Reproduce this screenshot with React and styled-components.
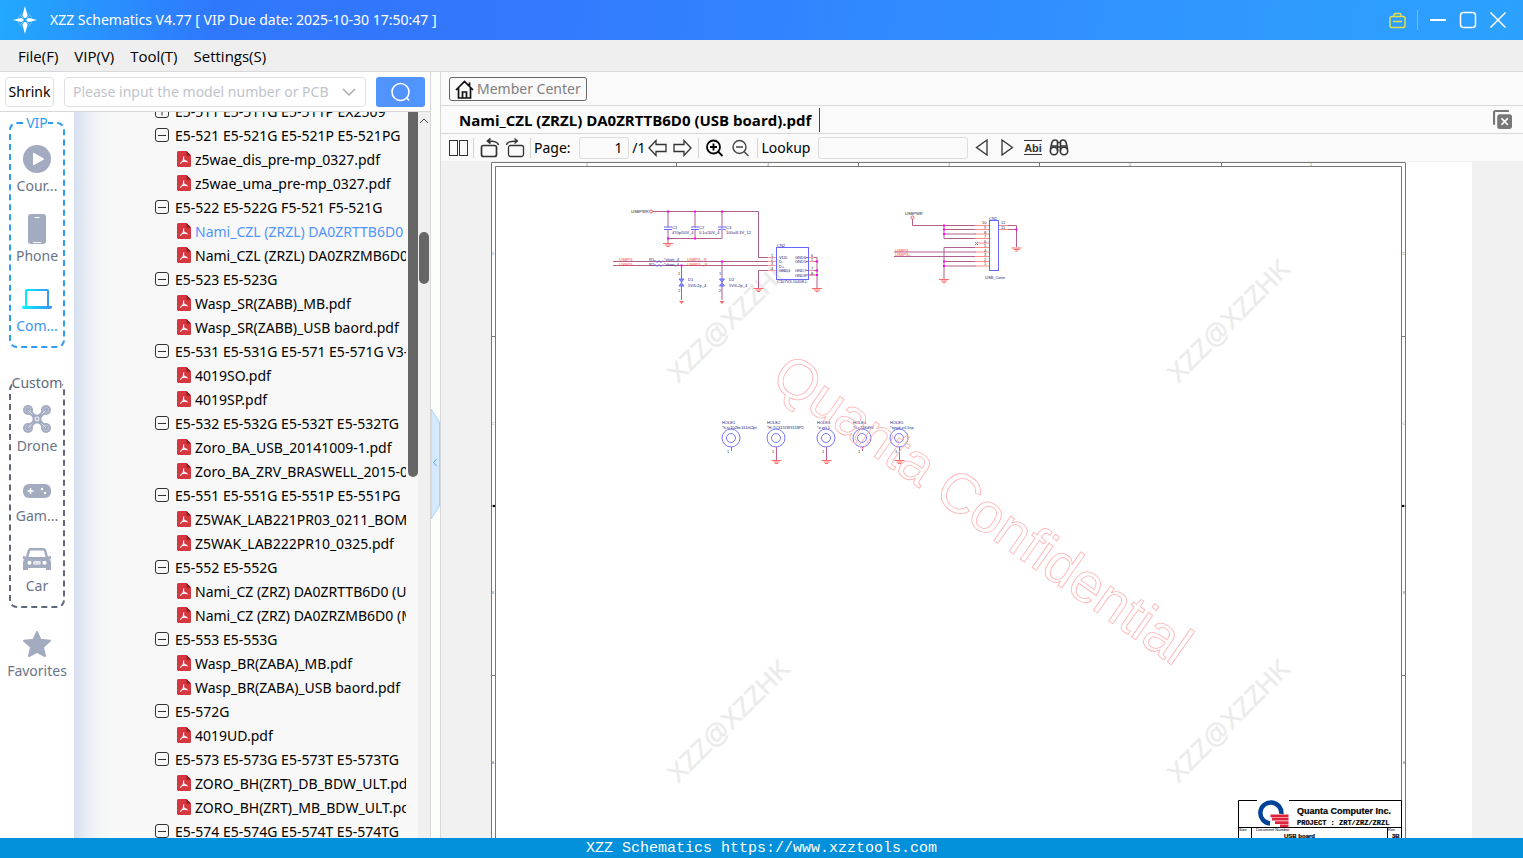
import React from "react";
import styled, { createGlobalStyle } from "styled-components";

const Global = createGlobalStyle`
  * { box-sizing: border-box; }
  html, body, #root { height: 100%; margin: 0; }
  body { font: 14px/24px "Noto Sans", "Open Sans", sans-serif; color: #000; overflow: hidden; }
  button, input { font: inherit; color: inherit; margin: 0; }
  button { background: none; border: 0; padding: 0; cursor: pointer; }
  ul { list-style: none; margin: 0; padding: 0; }
  svg { display: block; flex: none; }
`;

const Shell = styled.div`
  height: 100vh;
  display: flex;
  flex-direction: column;
`;

const TitleBar = styled.header`
  flex: none;
  height: 40px;
  display: flex;
  align-items: center;
  padding: 0 16px 0 12px;
  color: #fff;
  background: linear-gradient(97deg, #22a9fd 0%, #2f78fd 14%, #3377fe 32%, #2f9bff 85%, #2ba1fd 100%);
`;

const AppName = styled.h1`
  flex: 1;
  margin: 0 0 0 12px;
  font-size: 14px;
  font-weight: 400;
`;

const WindowControls = styled.div`
  display: flex;
  align-items: center;
  gap: 12px;
`;

const ControlDivider = styled.span`
  width: 1px;
  height: 20px;
  margin: 0 -1px;
  background: #7ab9ff;
`;

const MenuBar = styled.nav`
  flex: none;
  height: 32px;
  display: flex;
  align-items: center;
  gap: 16px;
  padding: 0 18px;
  font-family: "Open Sans", sans-serif;
  font-size: 15px;
  background: #efefef;
  border-bottom: 1px solid #d8d8d8;
`;

const Workspace = styled.div`
  flex: 1;
  min-height: 0;
  display: flex;
`;

const LeftPane = styled.aside`
  flex: none;
  width: 431px;
  display: flex;
  flex-direction: column;
  border-right: 1px solid #d8d8d8;
`;

const SearchRow = styled.form`
  flex: none;
  height: 40px;
  display: flex;
  align-items: center;
  gap: 10px;
  padding: 1px 5px 0;
  background: #fff;
  border-bottom: 1px solid #d8d8d8;
`;

const ShrinkButton = styled.button`
  width: 49px;
  height: 30px;
  border: 1px solid #dcdfe6;
  border-radius: 4px;
`;

const SearchField = styled.label`
  flex: 1;
  height: 30px;
  display: flex;
  align-items: center;
  padding: 0 9px 0 8px;
  border: 1px solid #dcdfe6;
  border-radius: 4px;
`;

const SearchInput = styled.input`
  flex: 1;
  min-width: 0;
  padding: 0;
  border: 0;
  outline: 0;
  &::placeholder { color: #c0c4cc; opacity: 1; }
`;

const SearchButton = styled.button`
  width: 49px;
  height: 30px;
  display: grid;
  place-items: center;
  background: #5294ff;
  border-radius: 3px;
`;

const Browser = styled.div`
  flex: 1;
  min-height: 0;
  display: flex;
`;

const Categories = styled.nav`
  flex: none;
  width: 74px;
  padding: 0 9px;
  background: #fff;
`;

const CategoryGroup = styled.fieldset`
  height: 236px;
  min-width: 0;
  margin: 0 0 ${(p) => p.$gap};
  padding: 7px 0 0;
  border: 2px dashed ${(p) => p.$color};
  border-radius: 8px;
`;

const GroupLabel = styled.legend`
  margin: 0 auto;
  padding: 0;
  line-height: 22px;
  color: ${(p) => p.$color};
`;

const Category = styled.button`
  width: 100%;
  height: 70px;
  display: flex;
  flex-direction: column;
  align-items: center;
  line-height: 18px;
  color: ${(p) => (p.$active ? "#3a96f5" : "#6b7487")};
  white-space: nowrap;
`;

const TreePane = styled.div`
  flex: 1;
  min-width: 0;
  padding-right: 12px;
  overflow: hidden;
  background: linear-gradient(90deg, #d5dff0 0, #e8ecf3 12px, #f3f5f7 24px, #f8f8f8 36px);
`;

const TreeList = styled.ul`
  margin-top: -13px;
  overflow: hidden;
  white-space: nowrap;
`;

const GroupRow = styled.button`
  height: 24px;
  display: flex;
  align-items: center;
  gap: 6px;
  padding-left: 81px;
`;

const FileRow = styled.a`
  height: 24px;
  display: flex;
  align-items: center;
  gap: 4px;
  padding-left: 103px;
  text-decoration: none;
  color: ${(p) => (p.$selected ? "#5294ff" : "#000")};
`;

const RowText = styled.span`
  padding-top: 2px;
`;

const InnerScroll = styled.div`
  flex: none;
  width: 10px;
  height: 365px;
  margin-left: -10px;
  background: #666;
  border-radius: 0 0 5px 5px;
`;

const ScrollTrack = styled.div`
  flex: none;
  width: 12px;
  padding: 6px 1px 0;
  background: #f0f0f0;
`;

const ScrollThumb = styled.div`
  height: 52px;
  margin-top: 108px;
  border-radius: 5px;
  background: #666;
`;

const Gutter = styled.div`
  position: relative;
  flex: none;
  width: 10px;
  background: #fbfffa;
  border-right: 1px solid #d8d8d8;
`;

const CollapseHandle = styled.button`
  position: absolute;
  top: 44%;
  left: 0;
`;

const Main = styled.main`
  flex: 1;
  min-width: 0;
  display: flex;
  flex-direction: column;
  background: #fafafa;
`;

const MemberBar = styled.div`
  flex: none;
  height: 34px;
  padding: 5px 8px 0;
  border-bottom: 1px solid #d8d8d8;
`;

const MemberButton = styled.button`
  height: 24px;
  display: flex;
  align-items: center;
  gap: 3px;
  padding: 0 5px;
  border: 1px solid #666;
  border-radius: 3px;
  color: #808080;
`;

const TabBar = styled.div`
  flex: none;
  height: 28px;
  display: flex;
  align-items: center;
  justify-content: space-between;
  padding: 0 11px 0 8px;
  border-bottom: 1px solid #d8d8d8;
`;

const Tab = styled.button`
  height: 24px;
  padding: 0 8px 0 10px;
  border-right: 1px solid #444;
  font-family: "Open Sans", sans-serif;
  font-size: 15px;
  font-weight: 700;
  line-height: 22px;
`;

const Toolbar = styled.div`
  flex: none;
  height: 27px;
  display: flex;
  align-items: center;
  padding-left: 7px;
`;

const ToolButton = styled.button`
  height: 24px;
  min-width: ${(p) => p.$width || "25px"};
  display: grid;
  place-items: center;
`;

const ToolDivider = styled.span`
  width: 1px;
  height: 20px;
  background: #d5d5d5;
  margin: 0 3px;
`;

const ToolField = styled.input`
  width: ${(p) => p.$width};
  height: 22px;
  margin-left: 8px;
  padding: 0 5px;
  border: 1px solid #dedede;
  border-radius: 3px;
  background: #fafafa;
  text-align: right;
`;

const Viewer = styled.section`
  flex: 1;
  min-height: 0;
  overflow: hidden;
  padding: 1px 51px 0 50px;
  background: #f1f1f1;
`;

const Sheet = styled.div`
  height: 100%;
  background: #fff;
  overflow: hidden;
`;

const Footer = styled.footer`
  flex: none;
  height: 20px;
  background: #0290db;
  color: #fff;
  font: 15px/22px "Liberation Mono", monospace;
  text-align: center;
`;

const AppLogo = () => (
  <svg width="26" height="30" viewBox="0 0 26 30" fill="#fff">
    <circle cx="13" cy="15" r="7" fill="none" stroke="#6fbaff" strokeWidth="1" />
    <path d="M13 1l2.600 9.500L14 13h-2l-1.600-2.500zM13 29l2.600-9.500L14 17h-2l-1.600 2.500zM1 15l8-2 2.500 1v2L9 17zM25 15l-8-2-2.500 1v2l2.500 1z" />
    <path d="M8.500 10.500l2.500 2.500M17.500 10.500L15 13M8.500 19.500L11 17M17.500 19.500L15 17" stroke="#8fcaff" />
  </svg>
);

const BagIcon = () => (
  <svg width="18" height="18" viewBox="0 0 18 18" fill="none" stroke="#e8e04a" strokeWidth="1.400">
    <rect x="2" y="5.500" width="15" height="11" rx="2" />
    <path d="M6 5.500V4A1.500 1.500 0 0 1 7.500 2.500h4A1.500 1.500 0 0 1 13 4v1.500M5 10.500h9" />
  </svg>
);

const MinimizeIcon = () => (
  <svg width="18" height="18" viewBox="0 0 18 18" stroke="#fff" strokeWidth="2"><path d="M1 9h16" /></svg>
);
const MaximizeIcon = () => (
  <svg width="18" height="18" viewBox="0 0 18 18" fill="none" stroke="#fff" strokeWidth="1.500"><rect x="1.500" y="1.500" width="15" height="15" rx="3" /></svg>
);
const CloseIcon = () => (
  <svg width="18" height="18" viewBox="0 0 18 18" stroke="#fff" strokeWidth="1.500"><path d="M1.500 1.500l15 15M16.500 1.500l-15 15" /></svg>
);

const ICON = "#a2abbf";

const PlayIcon = () => (
  <svg width="28" height="28" viewBox="0 0 28 28">
    <circle cx="14" cy="14" r="14" fill={ICON} />
    <path d="M10 8.500v11q0 1 1 .6l9.500-5.300q1-.8 0-1.600L11 7.900q-1-.4-1 .6z" fill="#fff" />
  </svg>
);
const PhoneIcon = () => (
  <svg width="18" height="30" viewBox="0 0 18 30">
    <rect width="18" height="30" rx="3" fill={ICON} />
    <path d="M6.500 3.500h5M5 28.500h8" stroke="#fff" strokeWidth="1.200" />
  </svg>
);
const LaptopIcon = () => (
  <svg width="30" height="20" viewBox="0 0 30 20">
    <defs>
      <linearGradient id="laptop" x1="0" x2="1"><stop offset="0" stopColor="#00f6ff" /><stop offset="1" stopColor="#3a8ef8" /></linearGradient>
    </defs>
    <path fillRule="evenodd" fill="url(#laptop)" d="M3 17V1.500Q3 0 4.500 0h21Q27 0 27 1.500V17h3v1q0 2-2 2H2q-2 0-2-2v-1zM5 2v15h20V2z" />
  </svg>
);
const DroneIcon = () => (
  <svg width="28" height="28" viewBox="0 0 28 28" fill={ICON}>
    <path d="M5 5l18 18M23 5L5 23" stroke={ICON} strokeWidth="4" />
    <rect x="9.500" y="9.500" width="9" height="9" rx="4" />
    {[[5, 5], [23, 5], [5, 23], [23, 23]].map(([x, y]) => (
      <g key={`${x}-${y}`}>
        <circle cx={x} cy={y} r="5" />
        <circle cx={x} cy={y} r="2.800" fill="none" stroke="#ccd2dd" strokeWidth=".6" />
      </g>
    ))}
    <circle cx="14" cy="14" r="2" fill="none" stroke="#fff" strokeWidth="1" />
    <path d="M5 5l4.500 4.500M23 5l-4.500 4.500M5 23l4.500-4.500M23 23l-4.500-4.500" stroke="#e2e5ec" strokeWidth=".8" />
  </svg>
);
const PadIcon = () => (
  <svg width="28" height="18" viewBox="0 -4 28 18">
    <rect width="28" height="14" rx="6" fill={ICON} />
    <path d="M4.500 7h6M7.500 4v6" stroke="#fff" strokeWidth="1.500" />
    <circle cx="19" cy="5" r="1.200" fill="#fff" />
    <circle cx="22" cy="9" r="1.200" fill="#fff" />
  </svg>
);
const CarIcon = () => (
  <svg width="28" height="24" viewBox="0 0 28 24">
    <path fill={ICON} fillRule="evenodd" d="M7.500 1h13q2 0 2.700 2l1.800 6.500 3-.5v3l-1.500.5q1.500 1 1.500 3V23h-5v-2H5v2H0v-7.500q0-2 1.500-3L0 12V9l3 .5L4.800 3Q5.500 1 7.500 1zM8 3.500q-.8 0-1 .8L5.500 10h17L21 4.300q-.2-.8-1-.8zM6.500 13.800a2 2 0 1 0 .01 0zM21.500 13.800a2 2 0 1 0 .01 0zM10.500 14.300v3.200h7v-3.200z" />
    <path d="M11.500 16h2m1 0h2" stroke={ICON} />
  </svg>
);
const StarIcon = () => (
  <svg width="28" height="28" viewBox="0 0 28 28" fill={ICON} stroke={ICON} strokeWidth="2" strokeLinejoin="round">
    <path d="M14 2l3.500 7.800 9.500 1-7 6.300L22 26l-8-4.200L6 26l2-8.900-7-6.300 9.500-1z" />
  </svg>
);

const ToggleIcon = ({ open = true }) => (
  <svg width="14" height="14" viewBox="0 0 14 14" fill="none" stroke="#333" strokeWidth="1">
    <rect x=".5" y=".5" width="13" height="13" rx="2.500" />
    <path d={open ? "M3 7.500h8" : "M3 7.500h8M7 3.500v8"} />
  </svg>
);

const PdfIcon = () => (
  <svg width="14" height="16" viewBox="0 0 14 16">
    <path d="M1.500 0H9.500L14 4.500V14.500Q14 16 12.500 16H1.500Q0 16 0 14.500V1.500Q0 0 1.500 0z" fill="#d4373f" />
    <path d="M9.500 0L14 4.500H9.500z" fill="#8d1720" />
    <path d="M6.600 5.500v2.500q0 2-3.300 4.500M6.700 8.500q1 2.300 4 2.400M4.500 11q3-1.300 5.500-.8" fill="none" stroke="#fff" strokeWidth="1.100" />
  </svg>
);

const SearchIcon = () => (
  <svg width="20" height="20" viewBox="0 0 20 20" fill="none" stroke="#fff" strokeWidth="1.600">
    <circle cx="9.500" cy="10" r="8.500" /><path d="M15.500 15.500L18 18.500" />
  </svg>
);
const Chevron = () => (
  <svg width="14" height="10" viewBox="0 0 14 10" fill="none" stroke="#a8abb2" strokeWidth="1.500"><path d="M1 2l6 6 6-6" /></svg>
);
const HomeIcon = () => (
  <svg width="19" height="20" viewBox="0 0 19 20" fill="none" stroke="#111" strokeWidth="1.700">
    <path d="M1 11l8.500-8.500L18 11M3.500 9v10h12V9M7.500 19v-6h4v6M14.500 7V3.500" />
  </svg>
);
const CloseAllIcon = () => (
  <svg width="19" height="19" viewBox="0 0 18 18" fill="none">
    <path d="M1 14V2.500Q1 1 2.500 1H15" stroke="#777" strokeWidth="2" />
    <rect x="4" y="4" width="14" height="14" rx="2.500" fill="#777" />
    <path d="M8 8l6 6M14 8l-6 6" stroke="#fff" strokeWidth="1.600" />
  </svg>
);

const line = { fill: "none", stroke: "#333", strokeWidth: 1.3 };
const PagesIcon = () => (
  <svg width="20" height="18" viewBox="0 0 20 18" {...line} strokeWidth="1"><rect x=".5" y="1.500" width="8" height="15" /><rect x="10.500" y="1.500" width="8" height="15" /></svg>
);
const RotateIcon = ({ flip }) => (
  <svg width="20" height="20" viewBox="0 0 20 20" {...line} strokeWidth={flip ? 1.3 : 1.7}>
    <g transform={flip ? "translate(20 0) scale(-1 1)" : undefined}>
      <rect x="1.500" y="7.500" width="15" height="11" rx="2" />
      <path d="M18.500 7Q18 3 8 3M10.500 .5L7.500 3l3 2.500" />
    </g>
  </svg>
);
const ArrowIcon = ({ flip }) => (
  <svg width="19" height="18" viewBox="0 0 19 18" {...line}>
    <path transform={flip ? "translate(19 0) scale(-1 1)" : undefined} d="M1 9l7-7.500V5.500h10v7H8v4z" />
  </svg>
);
const ZoomIcon = ({ plus }) => (
  <svg width="18" height="18" viewBox="0 0 18 18" fill="none" stroke={plus ? "#000" : "#444"} strokeWidth={plus ? 1.8 : 1.4}>
    <circle cx="7.500" cy="8" r="6.500" /><path d={plus ? "M12 12.500l4.500 4.500M4 8h7M7.500 4.500v7" : "M12 12.500l4.500 4.500M4 8h7"} />
  </svg>
);
const StepIcon = ({ flip }) => (
  <svg width="13" height="17" viewBox="0 0 13 17" {...line}>
    <path transform={flip ? "translate(13 0) scale(-1 1)" : undefined} d="M1.500 8.500L12 1v15z" />
  </svg>
);
const WordIcon = () => (
  <svg width="18" height="16" viewBox="0 0 18 16">
    <path d="M0 .5h18M0 14.500h18" stroke="#333" />
    <text x="9" y="12" fontSize="11" fontWeight="700" textAnchor="middle" fill="#333" fontFamily="Liberation Sans, sans-serif">Abi</text>
  </svg>
);
const BinocularsIcon = () => (
  <svg width="20" height="17" viewBox="0 0 20 17" {...line} strokeWidth="1.600">
    <path d="M1.500 10L3 3q1-2 3-2 2.500 0 2.500 2v9M18.500 10L17 3q-1-2-3-2-2.500 0-2.500 2v9M8.500 3.500h3M8.500 8h3" />
    <circle cx="5" cy="12" r="3.700" /><circle cx="15" cy="12" r="3.700" /><path d="M3 7h5M12 7h5" />
  </svg>
);

const VIP_BLUE = "#2f9bf5";
const SLATE = "#5f6879";

const vip = [
  ["Cour...", PlayIcon],
  ["Phone", PhoneIcon],
  ["Com...", LaptopIcon, true],
];
const custom = [
  ["Drone", DroneIcon],
  ["Gam...", PadIcon],
  ["Car", CarIcon],
];

const IconSlot = styled.span`
  height: 36px;
  display: grid;
  place-items: center;
`;

const CategoryItem = ({ label, Icon, active }) => (
  <Category type="button" $active={active}>
    <IconSlot><Icon /></IconSlot>
    {label}
  </Category>
);

const tree = [
  ["E5-511 E5-511G E5-511P EX2509", [], false],
  ["E5-521 E5-521G E5-521P E5-521PG", ["z5wae_dis_pre-mp_0327.pdf", "z5wae_uma_pre-mp_0327.pdf"]],
  ["E5-522 E5-522G F5-521 F5-521G", ["Nami_CZL (ZRZL) DA0ZRTTB6D0 (USB board).pdf", "Nami_CZL (ZRZL) DA0ZRZMB6D0 (MB).pdf"]],
  ["E5-523 E5-523G", ["Wasp_SR(ZABB)_MB.pdf", "Wasp_SR(ZABB)_USB baord.pdf"]],
  ["E5-531 E5-531G E5-571 E5-571G V3-531", ["4019SO.pdf", "4019SP.pdf"]],
  ["E5-532 E5-532G E5-532T E5-532TG", ["Zoro_BA_USB_20141009-1.pdf", "Zoro_BA_ZRV_BRASWELL_2015-01.pdf"]],
  ["E5-551 E5-551G E5-551P E5-551PG", ["Z5WAK_LAB221PR03_0211_BOM.pdf", "Z5WAK_LAB222PR10_0325.pdf"]],
  ["E5-552 E5-552G", ["Nami_CZ (ZRZ) DA0ZRTTB6D0 (USB board).pdf", "Nami_CZ (ZRZ) DA0ZRZMB6D0 (MB).pdf"]],
  ["E5-553 E5-553G", ["Wasp_BR(ZABA)_MB.pdf", "Wasp_BR(ZABA)_USB baord.pdf"]],
  ["E5-572G", ["4019UD.pdf"]],
  ["E5-573 E5-573G E5-573T E5-573TG", ["ZORO_BH(ZRT)_DB_BDW_ULT.pdf", "ZORO_BH(ZRT)_MB_BDW_ULT.pdf"]],
  ["E5-574 E5-574G E5-574T E5-574TG", []],
];

const Ground = ({ x, y }) => (
  <path d={`M${x - 5} ${y}h10M${x - 3} ${y + 1.5}h6M${x - 1.5} ${y + 3}h3`} stroke="#ff6b6b" strokeWidth="1" fill="none" />
);
const Dots = ({ at }) => at.map(([x, y]) => <rect key={`${x},${y}`} x={x - 1} y={y - 1} width="2" height="2" fill="#f0f" />);

const UsbPower = () => (
  <g fill="none">
    <g stroke="#b0608c">
      <path d="M653 211.500H758.500V257.500H770M668 211.500v16M695 211.500v16M722 211.500v16M668 230v8.500H722V230M695 230v8.500M668 238.500v5" />
      <path d="M613 261.500H770M613 265.500H770M681.500 265.500V300M722 261.500V300M776 270.500H758.500V288M817 257.500v31M806 257.500h11M806 261.500h11M806 270.500h11M806 275h11" />
    </g>
    <path d="M768 257.500h8M768 261.500h8M768 265.500h8M768 270.500h8M808 257.500h6M808 261.500h6M808 270.500h6M808 275h6" stroke="#f99" />
    <circle cx="651" cy="211.500" r="1.500" stroke="#f55" />
    <g stroke="#66f">
      <path d="M664 227h8M664 229.500h8M691 227h8M691 229.500h8M718 227h8M718 230q4-2 8 0M654 261.500l1-1 2 2 2-2 2 2 2-2M654 265.500l1-1 2 2 2-2 2 2 2-2" />
      <path d="M679 279h5l-2.500 3zM679 286h5l-2.500-3zM719.500 279h5l-2.500 3zM719.500 286h5l-2.500-3z" fill="#99f" />
      <rect x="776.500" y="247.500" width="32" height="32" />
    </g>
    <Ground x={668} y={243.5} /><Ground x={758.5} y={288.5} /><Ground x={817} y={288.5} />
    <path d="M679 301h5l-2.500 3zM719.500 301h5l-2.500 3z" fill="#f66" />
    <Dots at={[[668, 211.5], [695, 211.5], [722, 211.5], [668, 238.5], [695, 238.5], [722, 261.5], [681.5, 265.5], [817, 261.5], [817, 270.5], [817, 275]]} />
    <g fontSize="4" fill="#22227e">
      <text x="631" y="213" fill="#222">USBPWR</text>
      <text x="672" y="229">C1</text><text x="672" y="234">470p/50V_4</text>
      <text x="699" y="229">C2</text><text x="699" y="234">0.1u/10V_4</text>
      <text x="726" y="229">C3</text><text x="726" y="234">100u/6.3V_12</text>
      <text x="649" y="261">R1</text><text x="664" y="261">*short_4</text>
      <text x="649" y="266">R2</text><text x="664" y="266">*short_4</text>
      <text x="688" y="281">D1</text><text x="688" y="287">5V/0.2p_4</text>
      <text x="729" y="281">D2</text><text x="729" y="287">5V/0.2p_4</text>
      <text x="777" y="247">CN2</text><text x="777" y="283">C107V3-10408-L</text>
      <text x="779" y="259">VDD</text><text x="779" y="263">D-</text><text x="779" y="268">D+</text><text x="779" y="272">GND1</text>
      <text x="795" y="259">GND6</text><text x="795" y="263">GND5</text><text x="795" y="272">GND7</text><text x="795" y="277">GND8</text>
      <g fill="#f44">
        <text x="619" y="261">USBP3-</text><text x="619" y="266">USBP3+</text>
        <text x="687" y="261">USBP3-_R</text><text x="687" y="266">USBP3+_R</text>
      </g>
      <g fill="#333">
        <text x="771" y="257">1</text><text x="771" y="261">2</text><text x="771" y="265">3</text><text x="771" y="270">4</text>
        <text x="811" y="257">6</text><text x="811" y="261">5</text><text x="811" y="270">7</text><text x="811" y="275">8</text>
        <text x="678" y="275">1</text><text x="678" y="292">2</text><text x="719" y="275">1</text><text x="719" y="292">2</text>
      </g>
    </g>
  </g>
);

const UsbConnector = () => (
  <g fill="none">
    <path d="M912.500 219v6.500H976M944 225.500v13M944 229.500h32M944 234h32M944 238.500h32M894 252H976M894 256.500H976M976 247.500H944V279M944 261.500h32M944 266h32M1006 225.500h10.500V247M1006 229.500h10.500" stroke="#b0608c" />
    <path d="M975 225.500h14M975 229.500h14M975 234h14M975 238.500h14M978 243h11M975 247.500h14M975 252h14M975 256.500h14M975 261.500h14M975 266h14M999 225.500h9M999 229.500h9" stroke="#f88" />
    <path d="M975 242l3 3M978 242l-3 3" stroke="#a77" />
    <circle cx="912.500" cy="217.500" r="1.500" stroke="#f55" />
    <rect x="989.500" y="220.500" width="9" height="50" stroke="#66f" />
    <Ground x={1016.5} y={248} /><Ground x={944} y={279.5} />
    <Dots at={[[944, 225.5], [944, 229.5], [944, 234], [944, 261.5], [944, 266], [1016.5, 229.5]]} />
    <g fontSize="4" fill="#22227e">
      <text x="905" y="215" fill="#222">USBPWR</text>
      <text x="989" y="220">CN1</text><text x="985" y="279">USB_Conn</text>
      <text x="895" y="252" fill="#f44">USBP3-</text><text x="895" y="256" fill="#f44">USBP3+</text>
      <g fill="#333">
        <text x="982" y="224">10</text><text x="1001" y="224">12</text><text x="1001" y="229">11</text>
        {[9, 8, 7, 6, 5, 4, 3, 2, 1].map((n, i) => <text key={n} x="984" y={Math.round(229 + i * 4.5)}>{n}</text>)}
      </g>
    </g>
  </g>
);

const holes = [
  [731, "*h-tc102bc161t02pt", false],
  [776, "*H-TC315I393118P2", true],
  [826, "*o-zrl-1", true],
  [862, "*h-c236d98", false],
  [899, "*spad-zrl-1np", true],
];

const Holes = () => holes.map(([x, name, grounded], i) => (
  <g key={x} fill="none">
    <circle cx={x} cy="438" r="9" stroke="#77f" />
    <circle cx={x} cy="438" r="4.500" stroke="#77f" />
    <path d={`M${x + 0.5} 447v${grounded ? 13 : 4}`} stroke="#c0608c" />
    {grounded && <Ground x={x + 0.5} y={460.5} />}
    <text x={x - 9} y="424" fontSize="4" fill="#22227e">HOLE{i + 1}</text>
    <text x={x - 9} y="429" fontSize="4" fill="#22227e">{name}</text>
    <text x={x - 4} y="453" fontSize="4" fill="#333">1</text>
  </g>
));

const TitleBlock = () => (
  <g>
    <path d="M1238.500 860V800.500H1401.500V860M1238.500 827.500H1401.500M1251.500 827.500V860M1387.500 827.500V860" stroke="#000" fill="none" />
    <path d="M1257 799h32v28h-32z" fill="#fff" />
    <path d="M1270 823.400A10.500 10.500 0 1 1 1281.300 814" fill="none" stroke="#00429a" strokeWidth="4.500" />
    <path d="M1270.500 815.800H1288.500M1272 819.200H1288.500M1275 822.600H1288.500M1280 825.800H1288.500" stroke="#e0233c" strokeWidth="2.800" />
    <g fill="#000">
      <text x="1297" y="814" fontSize="9" fontWeight="700" stroke="#000" strokeWidth=".2">Quanta Computer Inc.</text>
      <text x="1297" y="825" fontSize="7" fontWeight="700" fontFamily="Liberation Mono, monospace" stroke="#000" strokeWidth=".2">PROJECT : ZRT/ZRZ/ZRZL</text>
      <text x="1239" y="831" fontSize="4">Size</text>
      <text x="1256" y="831" fontSize="4">Document Number</text>
      <text x="1388" y="831" fontSize="4">Rev</text>
      <text x="1284" y="838" fontSize="6" fontWeight="700" stroke="#000" strokeWidth=".2">USB board</text>
      <text x="1392" y="838" fontSize="6" fontWeight="700" stroke="#000" strokeWidth=".2">3B</text>
    </g>
  </g>
);

const marks = [[678, 384], [1178, 384], [678, 784], [1178, 784]];

const Schematic = () => (
  <svg width="981" height="698" viewBox="491 162 981 698" fontFamily="Liberation Sans, sans-serif" role="img" aria-label="USB board schematic">
    <g fill="#ebebeb" stroke="#ebebeb" strokeWidth=".3" fontSize="26">
      {marks.map(([x, y]) => <text key={`${x}-${y}`} transform={`translate(${x} ${y}) rotate(-45)`}>XZZ@XZZHK</text>)}
    </g>
    <g fill="none" stroke="#777">
      <path d="M491.500 860V162.500H1405.500V860M495.500 860V166.500H1401.500V860" />
      <path d="M676.500 162v4M858.500 162v4M1039.500 162v4M1221.500 162v4M491 336.500h4M491 675.500h4M1402 336.500h4M1402 675.500h4" />
    </g>
    <path d="M491 506h4M1402 506h4" stroke="#000" strokeWidth=".6" />
    <circle cx="494" cy="506" r="1.200" /><circle cx="1403" cy="506" r="1.200" />
    <g fontSize="4" fill="#888" textAnchor="middle">
      {[587, 768, 949, 1130, 1311].map((x, i) => <text key={x} x={x} y="166">{5 - i}</text>)}
      {[253, 423, 592, 762].map((y, i) => (
        <React.Fragment key={y}>
          <text x="493" y={y + 2}>{"DCBA"[i]}</text>
          <text x="1404" y={y + 2}>{"DCBA"[i]}</text>
        </React.Fragment>
      ))}
    </g>
    <UsbPower />
    <UsbConnector />
    <Holes />
    <text transform="translate(769 383) rotate(35)" fontSize="56" fill="none" stroke="#ffb0b0" strokeWidth=".8">Quanta Confidential</text>
    <TitleBlock />
  </svg>
);

export default function App() {
  return (
    <Shell>
      <Global />
      <TitleBar>
        <AppLogo />
        <AppName>XZZ Schematics V4.77 [ VIP Due date: 2025-10-30 17:50:47 ]</AppName>
        <WindowControls>
          <button type="button" aria-label="Shop"><BagIcon /></button>
          <ControlDivider />
          <button type="button" aria-label="Minimize"><MinimizeIcon /></button>
          <button type="button" aria-label="Maximize"><MaximizeIcon /></button>
          <button type="button" aria-label="Close"><CloseIcon /></button>
        </WindowControls>
      </TitleBar>
      <MenuBar>
        {["File(F)", "VIP(V)", "Tool(T)", "Settings(S)"].map((m) => <button type="button" key={m}>{m}</button>)}
      </MenuBar>
      <Workspace>
        <LeftPane>
          <SearchRow>
            <ShrinkButton type="button">Shrink</ShrinkButton>
            <SearchField>
              <SearchInput aria-label="Model number or PCB" placeholder="Please input the model number or PCB" />
              <Chevron />
            </SearchField>
            <SearchButton aria-label="Search"><SearchIcon /></SearchButton>
          </SearchRow>
          <Browser>
            <Categories>
              <CategoryGroup $color={VIP_BLUE} $gap="24px">
                <GroupLabel $color={VIP_BLUE}>VIP</GroupLabel>
                {vip.map(([label, Icon, active]) => <CategoryItem key={label} label={label} Icon={Icon} active={active} />)}
              </CategoryGroup>
              <CategoryGroup $color={SLATE} $gap="18px">
                <GroupLabel $color={SLATE}>Custom</GroupLabel>
                {custom.map(([label, Icon]) => <CategoryItem key={label} label={label} Icon={Icon} />)}
              </CategoryGroup>
              <CategoryItem label="Favorites" Icon={StarIcon} />
            </Categories>
            <TreePane>
              <TreeList>
                {tree.map(([name, files, open]) => (
                  <li key={name}>
                    <GroupRow type="button"><ToggleIcon open={open} /><RowText>{name}</RowText></GroupRow>
                    <ul>
                      {files.map((f) => (
                        <li key={f}>
                          <FileRow href="#" $selected={f.startsWith("Nami_CZL (ZRZL) DA0ZRTT")}><PdfIcon /><RowText>{f}</RowText></FileRow>
                        </li>
                      ))}
                    </ul>
                  </li>
                ))}
              </TreeList>
            </TreePane>
            <InnerScroll />
            <ScrollTrack>
              <svg width="10" height="6" viewBox="0 0 10 6" fill="none" stroke="#444"><path d="M1 5l4-4 4 4" /></svg>
              <ScrollThumb />
            </ScrollTrack>
          </Browser>
        </LeftPane>
        <Gutter>
          <CollapseHandle type="button" aria-label="Collapse panel">
            <svg width="9" height="110" viewBox="0 0 9 110">
              <path d="M0 0l8.500 13v84L0 110z" fill="#d5eaff" stroke="#a5d2fb" />
              <path d="M5.500 50l-3 3.500 3 3.500" fill="none" stroke="#4ba6f5" />
            </svg>
          </CollapseHandle>
        </Gutter>
        <Main>
          <MemberBar><MemberButton type="button"><HomeIcon />Member Center</MemberButton></MemberBar>
          <TabBar>
            <Tab type="button">Nami_CZL (ZRZL) DA0ZRTTB6D0 (USB board).pdf</Tab>
            <button type="button" aria-label="Close all tabs"><CloseAllIcon /></button>
          </TabBar>
          <Toolbar>
            <ToolButton aria-label="Two pages" $width="22px"><PagesIcon /></ToolButton>
            <ToolDivider />
            <ToolButton aria-label="Rotate left"><RotateIcon /></ToolButton>
            <ToolButton aria-label="Rotate right"><RotateIcon flip /></ToolButton>
            <ToolDivider />
            <label htmlFor="page">Page:</label>
            <ToolField id="page" $width="50px" defaultValue="1" />
            <span>&nbsp;/1</span>
            <ToolButton aria-label="Previous page"><ArrowIcon /></ToolButton>
            <ToolButton aria-label="Next page"><ArrowIcon flip /></ToolButton>
            <ToolDivider />
            <ToolButton aria-label="Zoom in" $width="26px"><ZoomIcon plus /></ToolButton>
            <ToolButton aria-label="Zoom out" $width="26px"><ZoomIcon /></ToolButton>
            <ToolDivider />
            <label htmlFor="lookup">Lookup</label>
            <ToolField id="lookup" $width="150px" />
            <ToolButton aria-label="Find previous" $width="26px"><StepIcon /></ToolButton>
            <ToolButton aria-label="Find next" $width="26px"><StepIcon flip /></ToolButton>
            <ToolButton aria-label="Whole word" $width="26px"><WordIcon /></ToolButton>
            <ToolButton aria-label="Find" $width="26px"><BinocularsIcon /></ToolButton>
          </Toolbar>
          <Viewer><Sheet><Schematic /></Sheet></Viewer>
        </Main>
      </Workspace>
      <Footer>XZZ Schematics https://www.xzztools.com</Footer>
    </Shell>
  );
}
